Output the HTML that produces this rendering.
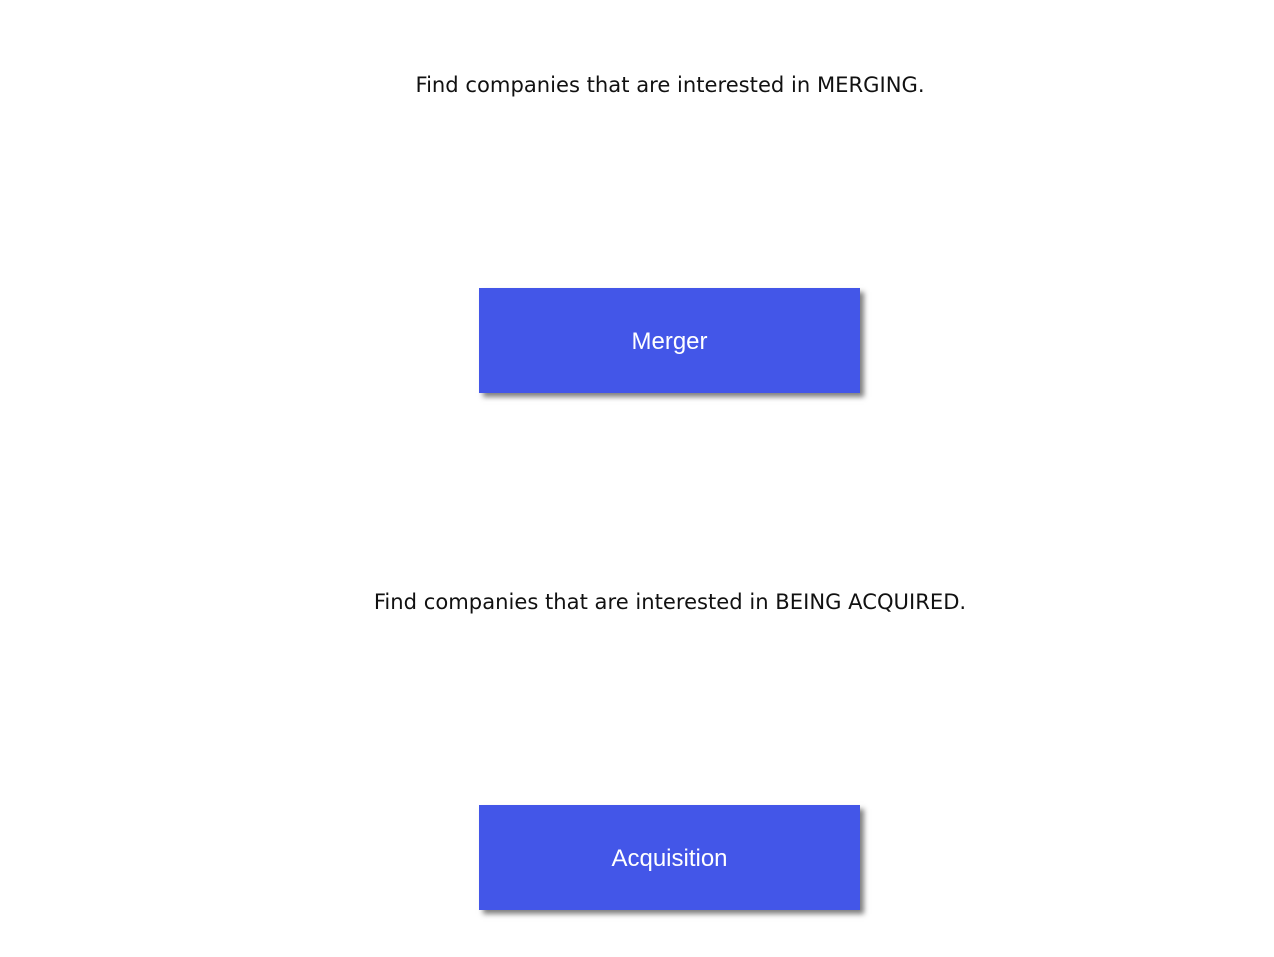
<!DOCTYPE html>
<html><head><style>
body{margin:0;width:1274px;height:957px;background:#fff;position:relative;overflow:hidden;font-family:"DejaVu Sans","Liberation Sans",sans-serif}
.t{position:absolute;left:0;width:1340px;text-align:center;font-size:21.1px;color:#111;line-height:30px;letter-spacing:0}
.b{position:absolute;left:479px;width:381px;height:105px;background:#4356e8;color:#fff;font-family:"Liberation Sans",Arial,sans-serif;font-size:24px;display:flex;align-items:center;justify-content:center;box-shadow:4px 4px 5px rgba(0,0,0,0.5)}
.b span{position:relative;top:1px}
</style></head><body>
<div class="t" style="top:70px">Find companies that are interested in MERGING.</div>
<div class="b" style="top:288px"><span>Merger</span></div>
<div class="t" style="top:587px">Find companies that are interested in BEING ACQUIRED.</div>
<div class="b" style="top:805px"><span>Acquisition</span></div>
</body></html>
